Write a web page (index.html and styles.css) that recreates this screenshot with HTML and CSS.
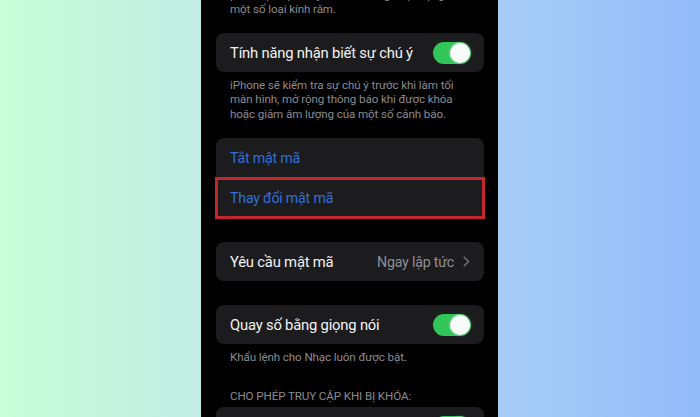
FILE: index.html
```html
<!DOCTYPE html>
<html lang="vi">
<head>
<meta charset="utf-8">
<title>Face ID &amp; Mật mã</title>
<link rel="stylesheet" href="styles.css">
</head>
<body>
<div class="stage">
  <div class="side"></div>
  <div class="phone">
    <p class="note note-top">phát hiện sự chú ý có thể không hoạt động với<br>một số loại kính râm.</p>

    <div class="card card-first">
      <div class="row">
        <span class="label">Tính năng nhận biết sự chú ý</span>
        <span class="toggle"><span class="knob"></span></span>
      </div>
    </div>
    <p class="note note-desc">iPhone sẽ kiểm tra sự chú ý trước khi làm tối<br>màn hình, mở rộng thông báo khi được khóa<br>hoặc giảm âm lượng của một số cảnh báo.</p>

    <div class="card card-pass">
      <div class="row row-tall"><span class="link">Tắt mật mã</span></div>
      <div class="row row-tall highlight"><span class="link">Thay đổi mật mã</span></div>
    </div>

    <div class="card card-require">
      <div class="row">
        <span class="label">Yêu cầu mật mã</span>
        <span class="value">Ngay lập tức
          <svg class="chev" width="7" height="11" viewBox="0 0 7 11"><path d="M1.2 1.2 L5.6 5.5 L1.2 9.8" fill="none" stroke="#6c6c70" stroke-width="1.6" stroke-linecap="round" stroke-linejoin="round"/></svg>
        </span>
      </div>
    </div>

    <div class="card card-voice">
      <div class="row">
        <span class="label">Quay số bằng giọng nói</span>
        <span class="toggle"><span class="knob"></span></span>
      </div>
    </div>
    <p class="note note-foot">Khẩu lệnh cho Nhạc luôn được bật.</p>

    <p class="note header">CHO PHÉP TRUY CẬP KHI BỊ KHÓA:</p>
    <div class="card card-last">
      <div class="row row-last">
        <span class="toggle"><span class="knob"></span></span>
      </div>
    </div>
  </div>
</div>
</body>
</html>
```

FILE: styles.css
```css
html, body {
  margin: 0;
  padding: 0;
}
body {
  width: 700px;
  height: 417px;
  overflow: hidden;
  font-family: Roboto, "Noto Sans", "DejaVu Sans", sans-serif;
  background: linear-gradient(90deg, #c9fed9 0px, #c1ece4 200px, #a8cdf5 500px, #93bbfa 700px);
}
.stage {
  display: flex;
  height: 417px;
}
.side {
  flex: none;
  width: 201px;
}
.phone {
  flex: none;
  width: 268px;
  height: 417px;
  overflow: hidden;
  background: #000;
  padding: 0 14px 0 15px;
}
.note {
  margin: 0;
  padding-left: 14px;
  font-size: 11.6px;
  line-height: 14.5px;
  color: #8b8b90;
  letter-spacing: -0.1px;
  white-space: nowrap;
}
.note-top {
  margin-top: -12.5px;
  margin-bottom: 16.5px;
}
.card {
  background: #1c1c1e;
  border-radius: 8px;
}
.row {
  height: 39px;
  display: flex;
  align-items: center;
  justify-content: space-between;
  padding: 0 13px 0 14px;
  box-sizing: border-box;
}
.row-tall {
  height: 40px;
}
.label {
  font-size: 14.8px;
  color: #f2f2f4;
  letter-spacing: -0.2px;
}
.link {
  font-size: 14.2px;
  color: #2f70dc;
  letter-spacing: -0.2px;
}
.highlight {
  background: #1c1c1e;
  outline: 3px solid #c3262d;
  outline-offset: -2px;
}
.toggle {
  width: 38px;
  height: 22px;
  border-radius: 11px;
  background: #32c65a;
  display: flex;
  align-items: center;
  justify-content: flex-end;
  padding: 0 1px;
  box-sizing: border-box;
}
.knob {
  width: 20px;
  height: 20px;
  border-radius: 50%;
  background: #fafafa;
  box-shadow: 0 0 3px rgba(255, 255, 255, 0.6);
}
.value {
  display: flex;
  align-items: center;
  gap: 9px;
  font-size: 14.2px;
  color: #8e8e93;
  letter-spacing: -0.2px;
  padding-right: 1px;
}
.note-desc {
  margin-top: 5.75px;
}
.card-pass {
  margin-top: 16.75px;
}
.card-require {
  margin-top: 24px;
}
.card-voice {
  margin-top: 24px;
}
.note-foot {
  margin-top: 6px;
}
.header {
  margin-top: 24.5px;
}
.card-last {
  margin-top: 3.5px;
}
.row-last {
  height: 39px;
  justify-content: flex-end;
}
```
